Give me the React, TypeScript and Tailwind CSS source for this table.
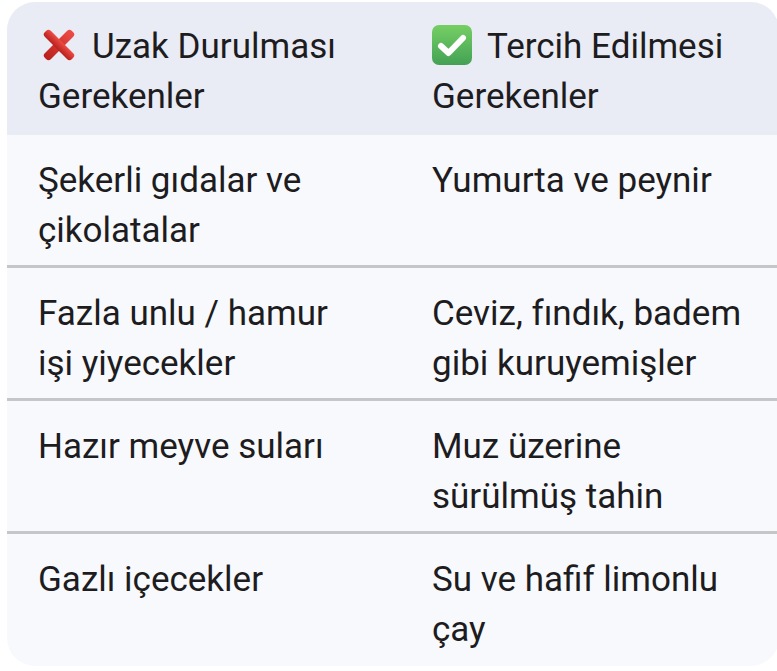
import type { ReactNode } from 'react'

const rows: [string, string][] = [
  ['Şekerli gıdalar ve çikolatalar', 'Yumurta ve peynir'],
  ['Fazla unlu / hamur işi yiyecekler', 'Ceviz, fındık, badem gibi kuruyemişler'],
  ['Hazır meyve suları', 'Muz üzerine sürülmüş tahin'],
  ['Gazlı içecekler', 'Su ve hafif limonlu çay'],
]

function CrossMark() {
  return (
    <svg width="36" height="36" viewBox="0 0 34 34" className="inline-block align-[-5px] ml-[3px] mr-[15px]">
      <defs>
        <linearGradient id="xg" x1="0" y1="0" x2="0" y2="1">
          <stop offset="0" stopColor="#ef4b45" />
          <stop offset="1" stopColor="#b8201c" />
        </linearGradient>
      </defs>
      <g transform="rotate(45 17 17)">
        <rect x="13" y="-1" width="8" height="36" rx="3" fill="url(#xg)" />
        <rect x="-1" y="13" width="36" height="8" rx="3" fill="url(#xg)" />
      </g>
    </svg>
  )
}

function CheckMark() {
  return (
    <svg width="40" height="40" viewBox="0 0 40 40" className="inline-block align-[-7px] mr-[15px]">
      <defs>
        <linearGradient id="cg" x1="0" y1="0" x2="0" y2="1">
          <stop offset="0" stopColor="#76cf64" />
          <stop offset="1" stopColor="#43a155" />
        </linearGradient>
      </defs>
      <rect x="0" y="0" width="40" height="40" rx="7" fill="url(#cg)" />
      <path d="M9 21 L16.5 28 L31 13" fill="none" stroke="#ffffff" strokeWidth="6" strokeLinecap="round" strokeLinejoin="round" />
    </svg>
  )
}

function Cell({ children, className = '' }: { children: ReactNode; className?: string }) {
  return <div className={`pl-[31px] ${className}`}>{children}</div>
}

export default function App() {
  return (
    <div className="min-h-screen bg-white pt-[2px] pl-[7px]">
      <div
        className="w-[772px] overflow-hidden rounded-[28px] text-[35px] leading-[50px] text-[#1d1c20]"
        style={{ fontFamily: 'Roboto, "Noto Sans", sans-serif' }}
      >
        {/* başlık */}
        <div className="grid grid-cols-[394px_1fr] bg-[#e9ebf5] pt-[20px] pb-[13px]">
          <Cell className="pr-[44px]">
            <CrossMark />
            Uzak Durulması Gerekenler
          </Cell>
          <Cell className="pr-[30px]">
            <CheckMark />
            Tercih Edilmesi Gerekenler
          </Cell>
        </div>

        {rows.map(([bad, good], i) => (
          <div
            key={i}
            className={`grid grid-cols-[394px_1fr] bg-[#f8f9fd] pt-[21px] ${
              i < rows.length - 1 ? 'h-[133px] border-b-[3px] border-[#c6c6c8]' : 'h-[132px]'
            }`}
          >
            <Cell className="pr-[44px]">{bad}</Cell>
            <Cell className="pr-[30px]">{good}</Cell>
          </div>
        ))}
      </div>
    </div>
  )
}
